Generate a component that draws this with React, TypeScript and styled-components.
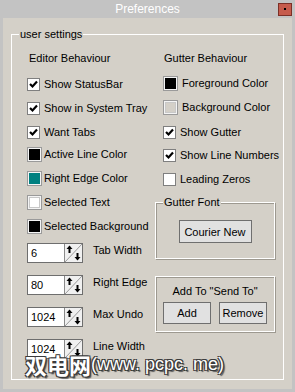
import styled, { createGlobalStyle } from "styled-components"

const Global = createGlobalStyle`
    html, body { margin: 0; padding: 0; background: #c3c3c3; }
`

const Window = styled.div`
    position: relative;
    width: 295px;
    height: 392px;
    display: flex;
    flex-direction: column;
    background: #c3c3c3;
    font-family: "Liberation Sans", Arial, sans-serif;
    font-size: 11px;
    color: #000;
    overflow: hidden;
`

const TitleBar = styled.div`
    height: 18px;
    display: grid;
    grid-template-columns: 1fr auto 1fr;
    align-items: center;
`

const Title = styled.div`
    grid-column: 2;
    color: #fff;
    font-size: 12px;
    line-height: 18px;
`

const CloseBtn = styled.div`
    grid-column: 3;
    justify-self: end;
    margin-right: 3px;
    width: 12px;
    height: 11px;
    background: #c65b4c;
    border: 1px solid #7c3027;
    display: flex;
    align-items: center;
    justify-content: center;

    span {
        width: 2px;
        height: 2px;
        background: #000;
    }
`

const Frame = styled.div`
    flex: 1;
    display: flex;
    padding: 0 4px 3px 3px;
`

const Body = styled.div`
    flex: 1;
    display: flex;
    background: #d4d0c8;
    padding: 16px 8px 9px 8px;
`

const Group = styled.div`
    position: relative;
    flex: 1;
    display: grid;
    grid-template-columns: 128px 120px;
    align-content: start;
    padding: 16px 8px 0 15px;
    border: 1px solid #fff;
`

const GroupLabel = styled.div<{ $left: number }>`
    position: absolute;
    left: ${p => p.$left}px;
    top: -7px;
    padding: 0 1px;
    line-height: 13px;
    background: #d4d0c8;
`

const Column = styled.div`
    display: flex;
    flex-direction: column;
`

const Heading = styled.div<{ $indent: number }>`
    height: 14px;
    line-height: 14px;
    padding-left: ${p => p.$indent}px;
`

const Row = styled.div<{ $mt: number; $indent?: number; $gap?: number }>`
    display: flex;
    align-items: center;
    margin-top: ${p => p.$mt}px;
    padding-left: ${p => p.$indent || 0}px;
    gap: ${p => p.$gap || 4}px;
    line-height: 13px;
    white-space: nowrap;
`

const Box = styled.span`
    width: 13px;
    height: 13px;
    box-sizing: border-box;
    border: 1px solid #7f7f7f;
    background: #fff;
    display: flex;
    align-items: center;
    justify-content: center;
    flex: none;
`

const Swatch = styled.span<{ $color: string }>`
    width: 15px;
    height: 15px;
    box-sizing: border-box;
    border: 1px solid #9a9a9a;
    padding: 1px;
    background: #f4f4f4;
    flex: none;

    &::after {
        content: "";
        display: block;
        width: 100%;
        height: 100%;
        box-sizing: border-box;
        background: ${p => p.$color};
        border: ${p => (p.$color === "#ffffff" || p.$color === "#d4d0c8" ? "1px solid #c8c8c8" : "none")};
    }
`

const SpinRow = styled.div<{ $mt: number }>`
    display: flex;
    align-items: flex-start;
    gap: 10px;
    margin-top: ${p => p.$mt}px;
    height: 20px;
    line-height: 14px;
`

const SpinBox = styled.div`
    width: 56px;
    height: 20px;
    box-sizing: border-box;
    border: 1px solid #6e6e6e;
    background: #fff;
    display: flex;
    flex: none;
`

const SpinValue = styled.div`
    flex: 1;
    padding-left: 3px;
    line-height: 18px;
    font-size: 11px;
`

const SpinButton = styled.div`
    width: 17px;
    height: 18px;
    border-left: 1px solid #8a8a8a;
    background: #f0f0f0;
`

const Panel = styled.div<{ $mt: number; $height: number }>`
    position: relative;
    margin-top: ${p => p.$mt}px;
    height: ${p => p.$height}px;
    box-sizing: border-box;
    border: 1px solid #fff;
    box-shadow: inset 1px 1px 0 #9d9990, 1px 1px 0 #9d9990;
    display: flex;
    flex-direction: column;
    align-items: center;
`

const PanelTitle = styled.div`
    margin-top: 8px;
    line-height: 13px;
`

const Buttons = styled.div`
    display: flex;
    gap: 8px;
    margin-top: 4px;
`

const Button = styled.div<{ $w: number; $h: number; $mt?: number }>`
    width: ${p => p.$w}px;
    height: ${p => p.$h}px;
    margin-top: ${p => p.$mt || 0}px;
    box-sizing: border-box;
    border: 1px solid #6f6f6f;
    background: #e1e1e1;
    display: flex;
    align-items: center;
    justify-content: center;
`

const Watermark = styled.div`
    position: absolute;
    left: 25px;
    top: 349px;
    font-family: "Liberation Sans", "Noto Sans CJK SC", sans-serif;
    font-size: 18px;
    line-height: 30px;
    color: #fff;
    white-space: nowrap;
    text-shadow: 1px 1px 0 #3a3a3a, -1px -1px 0 #3a3a3a, 1px -1px 0 #3a3a3a, -1px 1px 0 #3a3a3a, 2px 2px 1px #555;

    span {
        font-family: "Noto Sans CJK SC", sans-serif;
        font-size: 22px;
        font-weight: 700;
        vertical-align: top;
    }
`

const Check = () => (
    <svg width="9" height="9" viewBox="0 0 9 9">
        <polyline points="1,4 3.5,6.5 8,1.5" fill="none" stroke="#000" strokeWidth="2.2" />
    </svg>
)

const CheckRow = ({ label, checked, mt, indent }: { label: string; checked?: boolean; mt: number; indent?: number }) => (
    <Row $mt={mt} $indent={indent}>
        <Box>{checked && <Check />}</Box>
        {label}
    </Row>
)

const ColorRow = ({ label, color, mt, indent, gap }: { label: string; color: string; mt: number; indent?: number; gap: number }) => (
    <Row $mt={mt} $indent={indent} $gap={gap}>
        <Swatch $color={color} />
        {label}
    </Row>
)

const Spinner = ({ value, label, mt }: { value: string; label: string; mt: number }) => (
    <SpinRow $mt={mt}>
        <SpinBox>
            <SpinValue>{value}</SpinValue>
            <SpinButton>
                <svg width="17" height="18" viewBox="0 0 17 18">
                    <line x1="0" y1="18" x2="17" y2="0" stroke="#9a9a9a" strokeWidth="1" />
                    <polygon points="1.5,5 4.5,1.5 7.5,5" fill="#000" />
                    <rect x="3.5" y="4" width="2" height="5" fill="#000" />
                    <polygon points="9.5,13 12.5,16.5 15.5,13" fill="#000" />
                    <rect x="11.5" y="9" width="2" height="5" fill="#000" />
                </svg>
            </SpinButton>
        </SpinBox>
        {label}
    </SpinRow>
)

const App = () => {
    return (
        <Window>
            <Global />
            <TitleBar>
                <Title>Preferences</Title>
                <CloseBtn><span /></CloseBtn>
            </TitleBar>
            <Frame>
                <Body>
                    <Group>
                        <GroupLabel $left={7}>user settings</GroupLabel>
                        <Column>
                            <Heading $indent={2}>Editor Behaviour</Heading>
                            <CheckRow label="Show StatusBar" checked mt={13} />
                            <CheckRow label="Show in System Tray" checked mt={11} />
                            <CheckRow label="Want Tabs" checked mt={11} />
                            <ColorRow label="Active Line Color" color="#000000" mt={8} gap={2} />
                            <ColorRow label="Right Edge Color" color="#008080" mt={9} gap={2} />
                            <ColorRow label="Selected Text" color="#ffffff" mt={9} gap={2} />
                            <ColorRow label="Selected Background" color="#000000" mt={9} gap={2} />
                            <Spinner value="6" label="Tab Width" mt={9} />
                            <Spinner value="80" label="Right Edge" mt={12} />
                            <Spinner value="1024" label="Max Undo" mt={12} />
                            <Spinner value="1024" label="Line Width" mt={12} />
                        </Column>
                        <Column>
                            <Heading $indent={9}>Gutter Behaviour</Heading>
                            <ColorRow label="Foreground Color" color="#000000" mt={11} indent={8} gap={4} />
                            <ColorRow label="Background Color" color="#d4d0c8" mt={9} indent={8} gap={4} />
                            <CheckRow label="Show Gutter" checked mt={11} indent={8} />
                            <CheckRow label="Show Line Numbers" checked mt={10} indent={8} />
                            <CheckRow label="Leading Zeros" mt={11} indent={8} />
                            <Panel $mt={16} $height={57}>
                                <GroupLabel $left={7}>Gutter Font</GroupLabel>
                                <Button $w={73} $h={23} $mt={17}>Courier New</Button>
                            </Panel>
                            <Panel $mt={17} $height={56}>
                                <PanelTitle>Add To "Send To"</PanelTitle>
                                <Buttons>
                                    <Button $w={48} $h={22}>Add</Button>
                                    <Button $w={48} $h={22}>Remove</Button>
                                </Buttons>
                            </Panel>
                        </Column>
                    </Group>
                </Body>
            </Frame>
            <Watermark><span>双电网</span>(www. pcpc. me)</Watermark>
        </Window>
    )
}

export default App
